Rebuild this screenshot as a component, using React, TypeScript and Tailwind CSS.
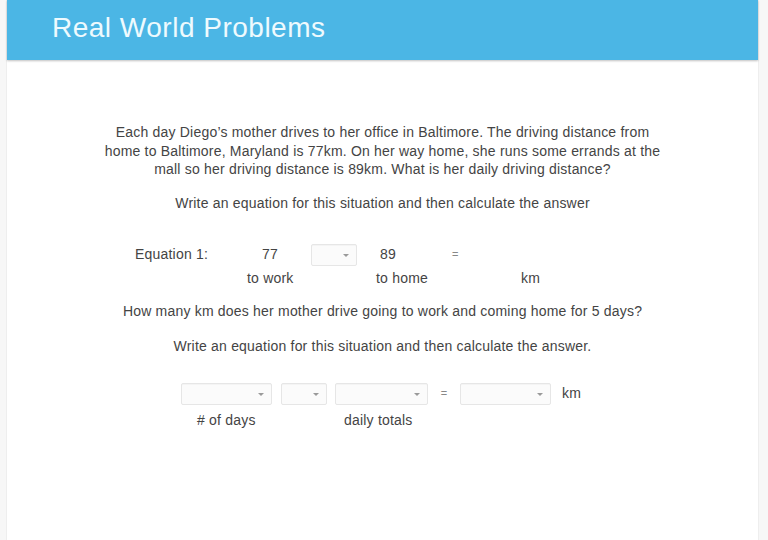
import React from "react";

function Select({ width }: { width: string }) {
  return (
    <div
      className={`${width} relative h-[22px] rounded-[2px] border border-[#e6e6e6] bg-[#fbfbfb] shadow-[inset_0_1px_1px_rgba(0,0,0,0.03)]`}
    >
      <span className="absolute right-[7px] top-[9px] h-0 w-0 border-x-[3px] border-t-[3px] border-x-transparent border-t-[#9a9a9a]" />
    </div>
  );
}

export default function App() {
  return (
    <div
      className="min-h-[540px] w-[768px] overflow-hidden bg-[#f7f7f7] text-[#444]"
      style={{ fontFamily: '"Liberation Sans", Arial, sans-serif' }}
    >
      <div className="ml-[6px] mr-[9px] min-h-[540px] border-x border-[#eeeeee] bg-white">
        <header className="flex h-[60px] items-center bg-[#4bb6e5] pl-[45px] shadow-[0_1px_2px_rgba(0,0,0,0.25)]">
          <h1 className="pb-[5px] text-[28px] font-normal tracking-[0.5px] text-[#eefafe]">Real World Problems</h1>
        </header>

        <main className="pt-[63px] text-[14px] tracking-[0.2px]">
          <p className="mx-auto w-[570px] text-center leading-[18.5px]">
            Each day Diego’s mother drives to her office in Baltimore. The driving distance from home to
            Baltimore, Maryland is 77km. On her way home, she runs some errands at the mall so her driving
            distance is 89km. What is her daily driving distance?
          </p>
          <p className="mt-[14px] text-center">Write an equation for this situation and then calculate the answer</p>

          <div className="mt-[30px] flex items-center pl-[128px]">
            <span className="w-[127px]">Equation 1:</span>
            <span className="w-[49px]">77</span>
            <Select width="w-[46px]" />
            <span className="ml-[23px] w-[72px]">89</span>
            <span className="text-[11px] text-[#888]">=</span>
          </div>
          <div className="mt-[2px] flex pl-[240px]">
            <span className="w-[129px]">to work</span>
            <span className="w-[145px]">to home</span>
            <span>km</span>
          </div>

          <p className="mt-[12px] text-center">How many km does her mother drive going to work and coming home for 5 days?</p>
          <p className="mt-[14px] text-center">Write an equation for this situation and then calculate the answer.</p>

          <div className="mt-[26px] flex items-center pl-[174px]">
            <Select width="w-[91px]" />
            <div className="ml-[9px]">
              <Select width="w-[46px]" />
            </div>
            <div className="ml-[8px]">
              <Select width="w-[93px]" />
            </div>
            <span className="w-[32px] text-center text-[11px] text-[#888]">=</span>
            <Select width="w-[91px]" />
            <span className="ml-[11px]">km</span>
          </div>
          <div className="mt-[5px] flex pl-[190px]">
            <span className="w-[147px]">#&nbsp;of days</span>
            <span>daily totals</span>
          </div>
        </main>
      </div>
    </div>
  );
}
